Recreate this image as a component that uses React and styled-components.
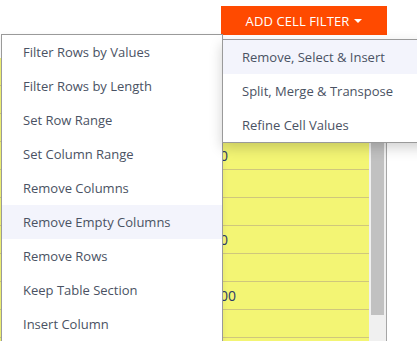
import React from "react";
import styled, { createGlobalStyle } from "styled-components";

const GlobalStyle = createGlobalStyle`
    html, body {
        margin: 0;
        padding: 0;
        background: #ffffff;
        overflow: hidden;
    }
    body {
        font-family: "Open Sans", "Noto Sans", sans-serif;
    }
`;

const Page = styled.div`
    position: relative;
    width: 417px;
    height: 341px;
    overflow: hidden;
`;

const Toolbar = styled.div`
    height: 58px;
    box-sizing: border-box;
    display: flex;
    justify-content: flex-end;
    align-items: flex-start;
    padding: 6px 30px 0 0;
`;

const FilterButton = styled.button`
    width: 166px;
    height: 29px;
    border: none;
    background: #ff4a00;
    color: #ffffff;
    font-family: "Open Sans", "Noto Sans", sans-serif;
    font-size: 13px;
    letter-spacing: 0.1px;
    text-transform: uppercase;
    display: flex;
    align-items: center;
    justify-content: center;
    gap: 5px;
    padding: 0;
    cursor: pointer;
`;

const Caret = styled.span`
    width: 0;
    height: 0;
    border-left: 4px solid transparent;
    border-right: 4px solid transparent;
    border-top: 4px solid #ffffff;
`;

const TableFrame = styled.div`
    width: 386px;
    display: flex;
    border-right: 1px solid #a6a6a6;
`;

const Rows = styled.div`
    width: 369px;
    background: #f3f574;
`;

const Row = styled.div`
    height: 28px;
    box-sizing: border-box;
    border-bottom: 1px solid #cfc77c;
    display: flex;
    align-items: center;
    padding-left: 204px;
    font-size: 14px;
    color: #2b3a67;
`;

const Scrollbar = styled.div`
    width: 17px;
    background: #f0f0f0;
    display: flex;
    justify-content: center;
`;

const Thumb = styled.div`
    width: 13px;
    height: 257px;
    background: #c1c1c1;
`;

const Menu = styled.ul`
    position: absolute;
    top: ${(p) => p.$top}px;
    left: ${(p) => p.$left}px;
    width: ${(p) => p.$width}px;
    margin: 0;
    padding: 0;
    list-style: none;
    background: #ffffff;
    border: 1px solid #9a9a9a;
    box-shadow: ${(p) => (p.$shadow ? "0 5px 12px rgba(0, 0, 0, 0.18)" : "0 2px 6px rgba(0, 0, 0, 0.08)")};
    z-index: ${(p) => p.$z};
`;

const Item = styled.li`
    height: 34px;
    display: flex;
    align-items: center;
    padding-left: ${(p) => p.$indent}px;
    font-size: 13px;
    color: #4a5263;
    background: ${(p) => (p.$active ? "#f3f4fc" : "transparent")};
    white-space: nowrap;
`;

const rows = ["", "", "", "100", "", "", "100", "", "1000", "", "", ""];

const leftItems = [
    "Filter Rows by Values",
    "Filter Rows by Length",
    "Set Row Range",
    "Set Column Range",
    "Remove Columns",
    "Remove Empty Columns",
    "Remove Rows",
    "Keep Table Section",
    "Insert Column",
];

const groups = ["Remove, Select & Insert", "Split, Merge & Transpose", "Refine Cell Values"];

export default function App() {
    return (
        <Page>
            <GlobalStyle />
            <Toolbar>
                <FilterButton>
                    Add Cell Filter
                    <Caret />
                </FilterButton>
            </Toolbar>
            <TableFrame>
                <Rows>
                    {rows.map((v, i) => (
                        <Row key={i}>{v}</Row>
                    ))}
                </Rows>
                <Scrollbar>
                    <Thumb />
                </Scrollbar>
            </TableFrame>
            <Menu $top={34} $left={1} $width={220} $z={1}>
                {leftItems.map((t) => (
                    <Item key={t} $indent={21} $active={t === "Remove Empty Columns"}>
                        {t}
                    </Item>
                ))}
            </Menu>
            <Menu $top={39} $left={222} $width={220} $z={2} $shadow>
                {groups.map((t, i) => (
                    <Item key={t} $indent={19} $active={i === 0}>
                        {t}
                    </Item>
                ))}
            </Menu>
        </Page>
    );
}
